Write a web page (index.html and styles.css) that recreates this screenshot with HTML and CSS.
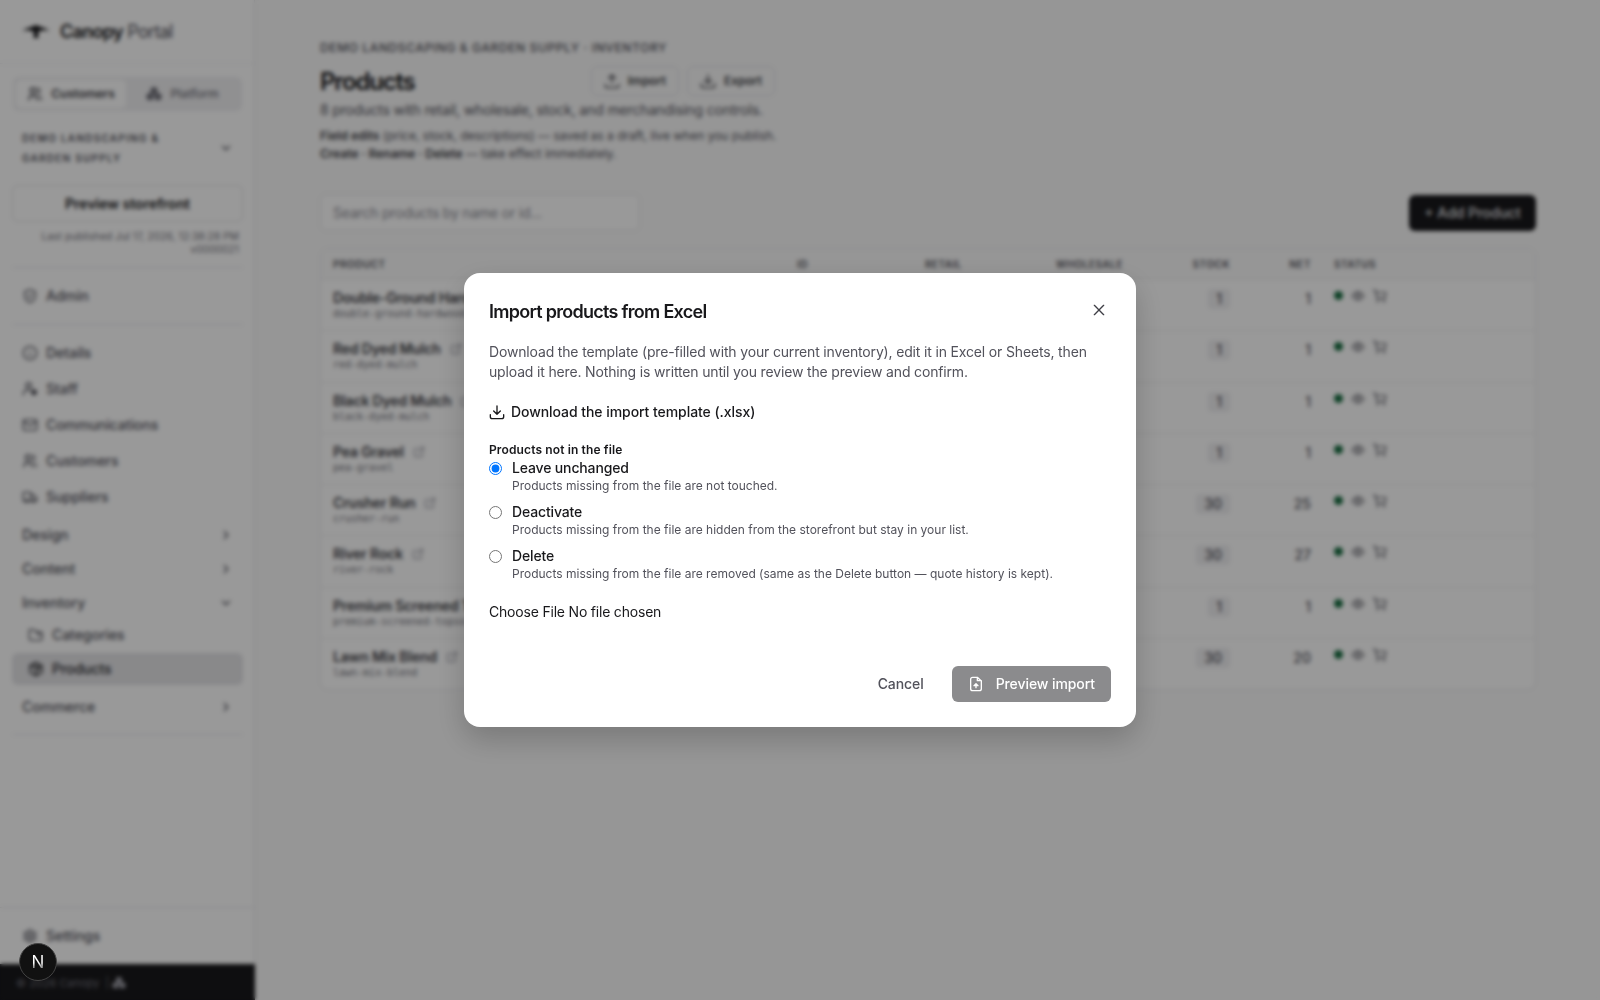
FILE: index.html
```html
<!DOCTYPE html>
<html lang="en">
<head>
    <meta charset="UTF-8">
    <meta name="viewport" content="width=device-width, initial-scale=1.0">
    <title>Products - Canopy Portal</title>
    <link rel="stylesheet" href="styles.css">
</head>
<body>
    <!-- Icons -->
    <svg class="sprite">
        <symbol id="i-users" viewBox="0 0 24 24"><circle cx="9" cy="7" r="4"/><path d="M3 21v-2a4 4 0 0 1 4-4h4a4 4 0 0 1 4 4v2M16 3.1a4 4 0 0 1 0 7.8M21 21v-2a4 4 0 0 0-3-3.9"/></symbol>
        <symbol id="i-trees" viewBox="0 0 24 24"><g fill="currentColor"><circle cx="12" cy="7" r="4.500"/><circle cx="6" cy="16" r="4.500"/><circle cx="18" cy="16" r="4.500"/></g></symbol>
        <symbol id="i-down" viewBox="0 0 24 24"><path d="M6 9l6 6 6-6"/></symbol>
        <symbol id="i-right" viewBox="0 0 24 24"><path d="M9 6l6 6-6 6"/></symbol>
        <symbol id="i-shield" viewBox="0 0 24 24"><path d="M12 2.5l8 3v6c0 5-3.400 8.500-8 10-4.600-1.500-8-5-8-10v-6zM9 12l2 2 4-4"/></symbol>
        <symbol id="i-info" viewBox="0 0 24 24"><circle cx="12" cy="12" r="10"/><path d="M12 8h.01M12 11.500v5"/></symbol>
        <symbol id="i-staff" viewBox="0 0 24 24"><circle cx="10" cy="7" r="4"/><path d="M2 21v-2a5 5 0 0 1 5-5h4"/><circle cx="18" cy="17" r="3.500" fill="currentColor"/></symbol>
        <symbol id="i-mail" viewBox="0 0 24 24"><rect x="2" y="4" width="20" height="16" rx="2"/><path d="M2 7l10 6 10-6"/></symbol>
        <symbol id="i-truck" viewBox="0 0 24 24"><circle cx="7" cy="18" r="2"/><circle cx="17" cy="18" r="2"/><path d="M5 18H2V5h11v13H9M13 9h5l4 5v4h-3"/></symbol>
        <symbol id="i-folder" viewBox="0 0 24 24"><path d="M5 20a3 3 0 0 1-3-3V4h7l3 3h6a3 3 0 0 1 3 3v7a3 3 0 0 1-3 3zM14 7v4h7"/></symbol>
        <symbol id="i-box" viewBox="0 0 24 24"><path d="M12 2l9 5v10l-9 5-9-5V7zM12 12v10M3 7l9 5 9-5M7.500 4.500l9 5v4"/></symbol>
        <symbol id="i-gear" viewBox="0 0 24 24"><circle cx="12" cy="12" r="8"/><circle cx="12" cy="12" r="3"/><path d="M12 2v3M12 19v3M3.300 7l2.600 1.500M18 15.500l2.700 1.500M3.300 17l2.600-1.500M18 8.500L20.700 7"/></symbol>
        <symbol id="i-upload" viewBox="0 0 24 24"><path d="M2 17v2a3 3 0 0 0 3 3h14a3 3 0 0 0 3-3v-2M7 8l5-5 5 5M12 3v12"/></symbol>
        <symbol id="i-download" viewBox="0 0 24 24"><path d="M2 16v3a3 3 0 0 0 3 3h14a3 3 0 0 0 3-3v-3M7 10.500l5 5 5-5M12 3v12.500"/></symbol>
        <symbol id="i-external" viewBox="0 0 24 24"><path d="M12 6H6a2 2 0 0 0-2 2v10a2 2 0 0 0 2 2h10a2 2 0 0 0 2-2v-6M11 13l9-9M15 4h5v5"/></symbol>
        <symbol id="i-eye" viewBox="0 0 24 24"><circle cx="12" cy="12" r="3"/><path d="M2 12q10-14 20 0-10 14-20 0z"/></symbol>
        <symbol id="i-cart" viewBox="0 0 24 24"><circle cx="8" cy="21" r="1"/><circle cx="19" cy="21" r="1"/><path d="M1 2h3l3 14h13l2-10H5"/></symbol>
        <symbol id="i-close" viewBox="0 0 24 24"><path d="M5 5l14 14M19 5L5 19"/></symbol>
        <symbol id="i-file" viewBox="0 0 24 24"><path d="M14 2v5h6M17 22H7a3 3 0 0 1-3-3V5a3 3 0 0 1 3-3h7l6 5.500V19a3 3 0 0 1-3 3zM12 17.500v-5M9 14.500l3-3 3 3z"/></symbol>
    </svg>

    <div class="app">
        <aside class="sidebar">
            <div class="brand">
                <svg class="brand-mark" viewBox="0 0 28 14"><path d="M0 6Q4 3 9 2l5-2 5 2q5 1 9 4-5-1.500-10 0l-2 1 .5 6h-5l.5-6-2-1Q5 4.500 0 6z"/></svg>
                <span><b>Canopy</b> Portal</span>
            </div>

            <div class="side-body">
                <div class="switch">
                    <span class="on"><svg class="icon"><use href="#i-users"/></svg>Customers</span>
                    <span><svg class="icon"><use href="#i-trees"/></svg>Platform</span>
                </div>
                <div class="tenant">
                    <span>Demo Landscaping &amp; Garden Supply</span>
                    <svg class="icon chev"><use href="#i-down"/></svg>
                </div>
                <button class="preview">Preview storefront</button>
                <div class="published">Last published Jul 17, 2026, 12:38:28 PM<br>v0000021</div>

                <div class="nav-block">
                    <a class="nav"><svg class="icon"><use href="#i-shield"/></svg>Admin</a>
                </div>
                <div class="nav-block main-nav">
                    <a class="nav"><svg class="icon"><use href="#i-info"/></svg>Details</a>
                    <a class="nav"><svg class="icon"><use href="#i-staff"/></svg>Staff</a>
                    <a class="nav"><svg class="icon"><use href="#i-mail"/></svg>Communications</a>
                    <a class="nav"><svg class="icon"><use href="#i-users"/></svg>Customers</a>
                    <a class="nav"><svg class="icon"><use href="#i-truck"/></svg>Suppliers</a>
                    <a class="group first">Design<svg class="icon chev"><use href="#i-right"/></svg></a>
                    <a class="group">Content<svg class="icon chev"><use href="#i-right"/></svg></a>
                    <a class="group">Inventory<svg class="icon chev"><use href="#i-down"/></svg></a>
                    <a class="nav sub"><svg class="icon"><use href="#i-folder"/></svg>Categories</a>
                    <a class="nav sub active"><svg class="icon"><use href="#i-box"/></svg>Products</a>
                    <a class="group last">Commerce<svg class="icon chev"><use href="#i-right"/></svg></a>
                </div>
            </div>

            <div class="side-settings">
                <a class="nav"><svg class="icon"><use href="#i-gear"/></svg>Settings</a>
            </div>
            <div class="side-footer">© 2026 Canopy &nbsp;|&nbsp; <svg class="icon"><use href="#i-trees"/></svg></div>
        </aside>

        <main>
            <header class="page-head">
                <div class="eyebrow">Demo Landscaping &amp; Garden Supply · Inventory</div>
                <div class="title-row">
                    <h1>Products</h1>
                    <div class="actions">
                        <button><svg class="icon"><use href="#i-upload"/></svg>Import</button>
                        <button><svg class="icon"><use href="#i-download"/></svg>Export</button>
                    </div>
                </div>
                <p class="summary">8 products with retail, wholesale, stock, and merchandising controls.</p>
                <p class="note"><b>Field edits</b> (price, stock, descriptions) — saved as a draft, live when you publish.<br><b>Create · Rename · Delete</b> — take effect immediately.</p>
            </header>

            <div class="toolbar">
                <input type="text" placeholder="Search products by name or id...">
                <button class="add">+ Add Product</button>
            </div>

            <div class="table" id="products">
                <div class="row head">
                    <span>Product</span><span>ID</span><span class="num">Retail</span><span class="num">Wholesale</span><span class="num">Stock</span><span class="num">Net</span><span class="status">Status</span>
                </div>
            </div>
        </main>
    </div>

    <!-- Import dialog -->
    <div class="overlay">
        <div class="modal" role="dialog">
            <div class="modal-head">
                <h2>Import products from Excel</h2>
                <svg class="icon close"><use href="#i-close"/></svg>
            </div>
            <p class="intro">Download the template (pre-filled with your current inventory), edit it in Excel or Sheets, then upload it here. Nothing is written until you review the preview and confirm.</p>
            <a class="template"><svg class="icon"><use href="#i-download"/></svg>Download the import template (.xlsx)</a>

            <div class="legend">Products not in the file</div>
            <label class="option">
                <input type="radio" name="missing" checked>
                <span>Leave unchanged<small>Products missing from the file are not touched.</small></span>
            </label>
            <label class="option">
                <input type="radio" name="missing">
                <span>Deactivate<small>Products missing from the file are hidden from the storefront but stay in your list.</small></span>
            </label>
            <label class="option">
                <input type="radio" name="missing">
                <span>Delete<small>Products missing from the file are removed (same as the Delete button — quote history is kept).</small></span>
            </label>

            <div class="file">Choose File No file chosen</div>

            <div class="modal-actions">
                <button class="cancel">Cancel</button>
                <button class="submit"><svg class="icon"><use href="#i-file"/></svg>Preview import</button>
            </div>
        </div>
    </div>

    <div class="dev-badge"><span>N</span></div>

    <script>
        const products = [
            ["Double-Ground Hardwood Mulch", "double-ground-hardwood-mulch", 1, 1],
            ["Red Dyed Mulch", "red-dyed-mulch", 1, 1],
            ["Black Dyed Mulch", "black-dyed-mulch", 1, 1],
            ["Pea Gravel", "pea-gravel", 1, 1],
            ["Crusher Run", "crusher-run", 30, 25],
            ["River Rock", "river-rock", 30, 27],
            ["Premium Screened Topsoil", "premium-screened-topsoil", 1, 1],
            ["Lawn Mix Blend", "lawn-mix-blend", 30, 20]
        ];
        const table = document.getElementById('products');

        products.forEach(([name, slug, stock, net]) => {
            const row = document.createElement('div');
            row.className = 'row';
            row.innerHTML = `
                <div><div class="name">${name}<svg class="icon"><use href="#i-external"/></svg></div><div class="slug">${slug}</div></div>
                <span></span><span></span><span></span>
                <span class="num"><span class="pill">${stock}</span></span>
                <span class="num net">${net}</span>
                <span class="status"><i class="dot"></i><svg class="icon"><use href="#i-eye"/></svg><svg class="icon"><use href="#i-cart"/></svg></span>`;
            table.appendChild(row);
        });
    </script>
</body>
</html>
```
FILE: styles.css
```css
* {
    box-sizing: border-box;
}

body {
    margin: 0;
    font-family: Inter, "Liberation Sans", sans-serif;
    font-size: 14px;
    line-height: 20px;
    color: #18181b;
    background: #fafafa;
}

h1, h2, p {
    margin: 0;
}

button, input {
    font: inherit;
    color: inherit;
}

.sprite {
    display: none;
}

.icon {
    width: 16px;
    height: 16px;
    flex: none;
    fill: none;
    stroke: currentColor;
    stroke-width: 2;
    stroke-linecap: round;
    stroke-linejoin: round;
}

.app {
    display: flex;
    height: 1000px;
    overflow: hidden;
}

/* Sidebar */
.sidebar {
    width: 255px;
    flex: none;
    display: flex;
    flex-direction: column;
    background: #fff;
    border-right: 1px solid #e4e4e7;
    color: #52525b;
}

.brand {
    height: 64px;
    padding: 0 22px;
    display: flex;
    align-items: center;
    gap: 10px;
    border-bottom: 1px solid #f0f0f2;
    font-size: 18px;
    letter-spacing: -0.7px;
}

.brand b {
    color: #18181b;
    font-weight: 600;
}

.brand-mark {
    width: 28px;
    height: 14px;
    fill: #18181b;
}

.side-body {
    flex: 1;
    padding: 13px 11px 0 12px;
}

.switch {
    display: flex;
    height: 34px;
    margin: 0 1px;
    padding: 3px;
    border-radius: 6px;
    background: #f0f0f2;
    font-size: 12px;
    font-weight: 500;
    color: #71717a;
}

.switch span {
    flex: 1;
    display: flex;
    align-items: center;
    justify-content: center;
    gap: 8px;
    border-radius: 5px;
}

.switch .on {
    flex: 0 0 110px;
    background: #fff;
    color: #3f3f46;
    font-weight: 600;
}

.tenant {
    display: flex;
    align-items: center;
    justify-content: space-between;
    margin-top: 17px;
    padding: 0 10px;
    font-size: 10px;
    font-weight: 600;
    letter-spacing: 1.25px;
    text-transform: uppercase;
}

.tenant span {
    width: 150px;
}

.chev {
    width: 14px;
    height: 14px;
    stroke-width: 2.5;
}

.preview {
    display: block;
    width: 100%;
    height: 37px;
    margin-top: 17px;
    border: 1px solid #e4e4e7;
    border-radius: 6px;
    background: #fff;
    color: #18181b;
    font-weight: 600;
}

.published {
    margin: 8px 4px 0 0;
    font-size: 10px;
    line-height: 13px;
    letter-spacing: 0.15px;
    text-align: right;
    white-space: nowrap;
    color: #71717a;
}

.nav-block {
    margin-top: 11px;
    padding: 10px 0;
    border-top: 1px solid #e9e9ec;
}

.nav-block + .nav-block {
    margin-top: 0;
    border-bottom: 1px solid #e9e9ec;
}

.nav {
    display: flex;
    align-items: center;
    gap: 8px;
    height: 36px;
    padding: 0 10px;
    font-weight: 500;
    letter-spacing: -0.05px;
}

.group {
    display: flex;
    align-items: center;
    justify-content: space-between;
    height: 34px;
    padding: 0 10px;
    font-weight: 500;
}

.group.first {
    margin-top: 3px;
}

.group.last {
    margin-top: 5px;
}

.sub {
    height: 29px;
    padding-left: 16px;
}

.active {
    height: 32px;
    margin-top: 4px;
    border-radius: 6px;
    background: #e4e4e7;
    color: #27272a;
}

.side-settings {
    height: 57px;
    padding: 10px 12px;
    border-top: 1px solid #e9e9ec;
}

.side-footer {
    display: flex;
    align-items: center;
    height: 36px;
    margin-right: -1px;
    padding: 2px 0 0 16px;
    background: #18181b;
    color: #71717a;
    font-size: 11px;
}

.side-footer .icon {
    width: 14px;
    height: 14px;
    color: #a1a1aa;
}

/* Page */
main {
    flex: 1;
    padding: 38px 64px 0 65px;
}

.page-head {
    width: 455px;
}

.eyebrow {
    font-size: 12px;
    font-weight: 500;
    letter-spacing: 0.62px;
    text-transform: uppercase;
    color: #52525b;
}

.title-row {
    display: flex;
    align-items: center;
    justify-content: space-between;
    height: 32px;
    margin-top: 7px;
}

h1 {
    font-size: 24px;
    font-weight: 600;
    letter-spacing: -1.2px;
    padding-top: 1px;
}

.actions {
    display: flex;
    gap: 8px;
}

.actions button {
    display: flex;
    align-items: center;
    gap: 8px;
    height: 30px;
    padding: 0 12px;
    border: 1px solid #e4e4e7;
    border-radius: 6px;
    background: none;
    font-size: 12px;
    font-weight: 600;
    color: #3f3f46;
}

.summary {
    margin-top: 3px;
    letter-spacing: -0.15px;
    color: #52525b;
}

.note {
    margin-top: 7px;
    font-size: 12px;
    line-height: 18px;
    color: #52525b;
    white-space: nowrap;
}

.note b {
    font-weight: 600;
    color: #3f3f46;
}

.toolbar {
    display: flex;
    justify-content: space-between;
    margin-top: 31px;
}

.toolbar input {
    width: 320px;
    height: 37px;
    padding: 0 12px;
    border: 1px solid #e4e4e7;
    border-radius: 6px;
    background: #fff;
    letter-spacing: -0.2px;
}

.toolbar input::placeholder {
    color: #8c8c95;
}

.add {
    width: 127px;
    height: 36px;
    margin-top: 1px;
    padding: 0;
    border: 0;
    border-radius: 6px;
    background: #18181b;
    color: #e4e4e7;
    font-weight: 500;
}

.table {
    margin-top: 17px;
    border: 1px solid #e9e9ec;
    border-radius: 8px;
    background: #fff;
    overflow: hidden;
}

.row {
    display: grid;
    grid-template-columns: 464px 80px 85px 161px 107px 81px 1fr;
    height: 51.25px;
    padding: 9px 12px 0;
    border-top: 1px solid #ececef;
    color: #52525b;
}

.head {
    height: 30px;
    padding-top: 5px;
    border-top: 0;
    background: #fafafa;
    font-size: 10px;
    font-weight: 600;
    letter-spacing: 0.5px;
    text-transform: uppercase;
}

.num {
    text-align: right;
}

.status {
    display: flex;
    gap: 8px;
    padding-left: 23px;
}

.name {
    display: flex;
    align-items: center;
    gap: 8px;
    height: 18px;
    font-weight: 600;
    letter-spacing: -0.17px;
    white-space: nowrap;
    color: #3f3f46;
}

.name .icon {
    width: 14px;
    height: 14px;
    color: #a1a1aa;
}

.slug {
    font-family: "DejaVu Sans Mono", monospace;
    font-size: 10px;
    line-height: 14px;
    color: #71717a;
}

.pill {
    display: inline-block;
    padding: 0 8px;
    border-radius: 4px;
    background: #f0f0f2;
    font-weight: 500;
}

.net {
    font-weight: 500;
}

.status .dot {
    width: 9px;
    height: 9px;
    margin-top: 2px;
    border-radius: 50%;
    background: #166b3f;
}

.row .status .icon {
    width: 14px;
    height: 14px;
}

/* Dialog */
.overlay {
    position: fixed;
    inset: 0;
    display: flex;
    align-items: center;
    justify-content: center;
    background: rgba(0, 0, 0, 0.4);
    backdrop-filter: blur(2px);
}

.modal {
    width: 672px;
    height: 454px;
    padding: 24px 25px;
    border-radius: 16px;
    background: #fff;
    box-shadow: 0 12px 30px rgba(0, 0, 0, 0.2);
}

.modal-head {
    display: flex;
    justify-content: space-between;
    height: 45px;
}

h2 {
    padding-top: 1px;
    font-size: 18px;
    line-height: 28px;
    font-weight: 600;
    letter-spacing: -0.72px;
}

.close {
    margin: 5px 4px 0 0;
    color: #3f3f46;
}

.intro {
    letter-spacing: -0.16px;
    color: #52525b;
}

.template {
    display: flex;
    align-items: center;
    gap: 6px;
    margin-top: 20px;
    font-weight: 500;
    letter-spacing: -0.06px;
}

.legend {
    margin-top: 20px;
    font-size: 12px;
    line-height: 16px;
    font-weight: 600;
    letter-spacing: 0.13px;
}

.option {
    display: flex;
    gap: 10px;
    height: 44px;
    font-weight: 500;
    letter-spacing: -0.15px;
}

.option input {
    width: 13px;
    height: 13px;
    margin: 4px 0 0;
}

.option small {
    display: block;
    font-size: 12px;
    line-height: 16px;
    font-weight: 400;
    letter-spacing: 0;
    color: #52525b;
}

.file {
    margin-top: 12px;
    letter-spacing: -0.2px;
}

.modal-actions {
    display: flex;
    justify-content: flex-end;
    margin-top: 44px;
}

.modal-actions button {
    height: 36px;
    padding: 0 16px;
    border: 0;
    border-radius: 6px;
    background: none;
    font-weight: 500;
    letter-spacing: -0.08px;
}

.modal-actions .cancel {
    margin-right: 12px;
    color: #52525b;
}

.modal-actions .submit {
    display: flex;
    align-items: center;
    gap: 12px;
    background: #8b8b8d;
    color: #fff;
}

.dev-badge {
    position: fixed;
    left: 19px;
    bottom: 19px;
    width: 38px;
    height: 38px;
    border: 1px solid #444;
    border-radius: 50%;
    background: #111;
    font-size: 17px;
    line-height: 37px;
    text-align: center;
}

.dev-badge span {
    background: linear-gradient(#fff 55%, #999 75%);
    background-clip: text;
    color: transparent;
}
```
